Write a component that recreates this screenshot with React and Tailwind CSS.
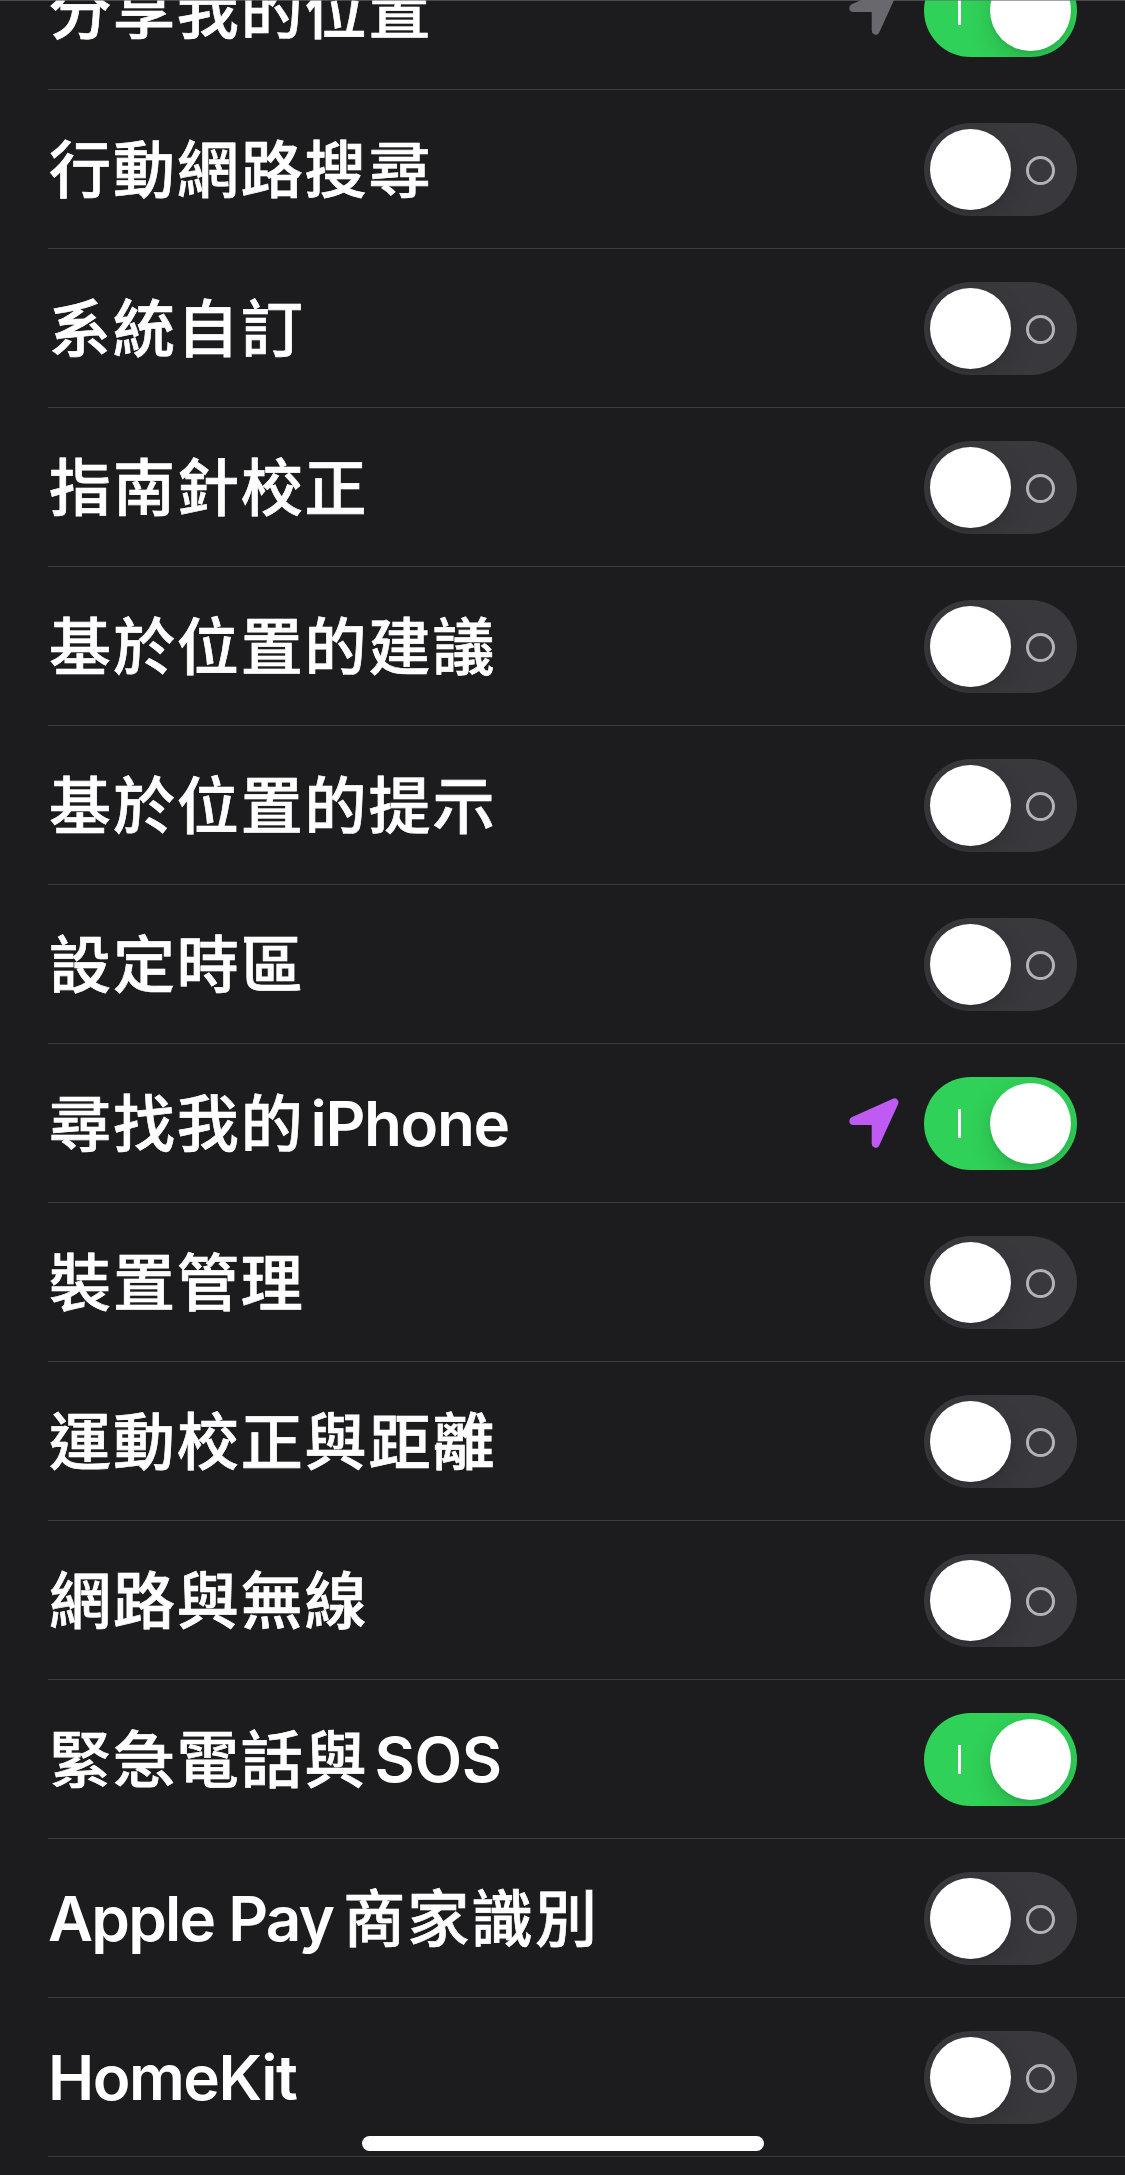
const ROWS = [
  { id: 'share', label: [{ cjk: '分享我的位置' }], on: true, arrow: 'text-[#69686e]' },
  { id: 'cell', label: [{ cjk: '行動網路搜尋' }] },
  { id: 'custom', label: [{ cjk: '系統自訂' }] },
  { id: 'compass', label: [{ cjk: '指南針校正' }] },
  { id: 'suggest', label: [{ cjk: '基於位置的建議' }] },
  { id: 'alerts', label: [{ cjk: '基於位置的提示' }] },
  { id: 'timezone', label: [{ cjk: '設定時區' }] },
  { id: 'findmy', label: [{ cjk: '尋找我的' }, { latin: 'iPhone', cls: 'ml-[6px] tracking-[-1.4px]' }], on: true, arrow: 'text-[#bf5af2]' },
  { id: 'device', label: [{ cjk: '裝置管理' }] },
  { id: 'motion', label: [{ cjk: '運動校正與距離' }] },
  { id: 'network', label: [{ cjk: '網路與無線' }] },
  { id: 'sos', label: [{ cjk: '緊急電話與' }, { latin: 'SOS', cls: 'ml-[6px] tracking-[-0.4px]' }], on: true },
  { id: 'pay', label: [{ latin: 'Apple Pay', cls: 'mr-[10px] -ml-px tracking-[-1.8px]' }, { cjk: '商家識別' }] },
  { id: 'homekit', label: [{ latin: 'HomeKit', cls: '-ml-px tracking-[-1.5px]' }] },
];

function LocationArrow({ className }) {
  return (
    <svg
      viewBox="0 0 50 50"
      className={`w-[50px] h-[50px] shrink-0 ${className}`}
      fill="currentColor"
      stroke="currentColor"
      strokeWidth="8"
      strokeLinejoin="round"
    >
      <path d="M4.3 23 L45.5 4.3 L26.7 45.6 V23 Z" />
    </svg>
  );
}

function Switch({ on }) {
  return (
    <div
      className={`flex items-center justify-between w-[153px] h-[93px] rounded-full overflow-hidden shrink-0 p-[6px] ${
        on ? 'flex-row-reverse bg-[#30d158]' : 'bg-[#39383d]'
      }`}
    >
      <span className="size-[81px] rounded-full bg-white shadow-[0_9px_24px_rgba(0,0,0,0.15),0_3px_3px_rgba(0,0,0,0.06)]" />
      {on ? (
        <span className="w-[3px] h-[29px] ml-[28px] bg-white" />
      ) : (
        <span className="size-[29px] mr-[16px] mt-[2px] rounded-full border-3 border-[#b3b3b5]" />
      )}
    </div>
  );
}

function Row({ row }) {
  return (
    <li className="ml-12 h-[159px] shrink-0 flex items-center border-b border-[#3d3d41] pr-12">
      {/* spans have no line height of their own, so every label shares one baseline */}
      <div className="flex-1 pb-[6px] pl-px text-white whitespace-nowrap font-['Noto_Sans_CJK_TC',sans-serif] text-[62px] leading-[90px]">
        {row.label.map((part) =>
          part.cjk ? (
            <span key={part.cjk} className="leading-[0] font-medium tracking-[1.9px] [-webkit-text-stroke:0.7px_white]">
              {part.cjk}
            </span>
          ) : (
            <span
              key={part.latin}
              className={`font-['Inter',sans-serif] text-[62px] leading-[0] font-semibold align-[1px] ${part.cls}`}
            >
              {part.latin}
            </span>
          )
        )}
      </div>
      {row.arrow && <LocationArrow className={`mr-[25px] ${row.arrow}`} />}
      <Switch on={row.on} />
    </li>
  );
}

export default function App() {
  return (
    <div className="relative w-[1125px] h-[2175px] overflow-hidden bg-[#1c1c1e]">
      <ul className="flex flex-col -mt-[69px]">
        {ROWS.map((row) => (
          <Row key={row.id} row={row} />
        ))}
      </ul>
      {/* nav bar hairline */}
      <div className="absolute inset-x-0 top-0 h-px bg-[#6b6b6e]/60" />
      {/* home indicator */}
      <div className="absolute left-[362px] top-[2136px] w-[402px] h-[15px] rounded-full bg-white" />
    </div>
  );
}
